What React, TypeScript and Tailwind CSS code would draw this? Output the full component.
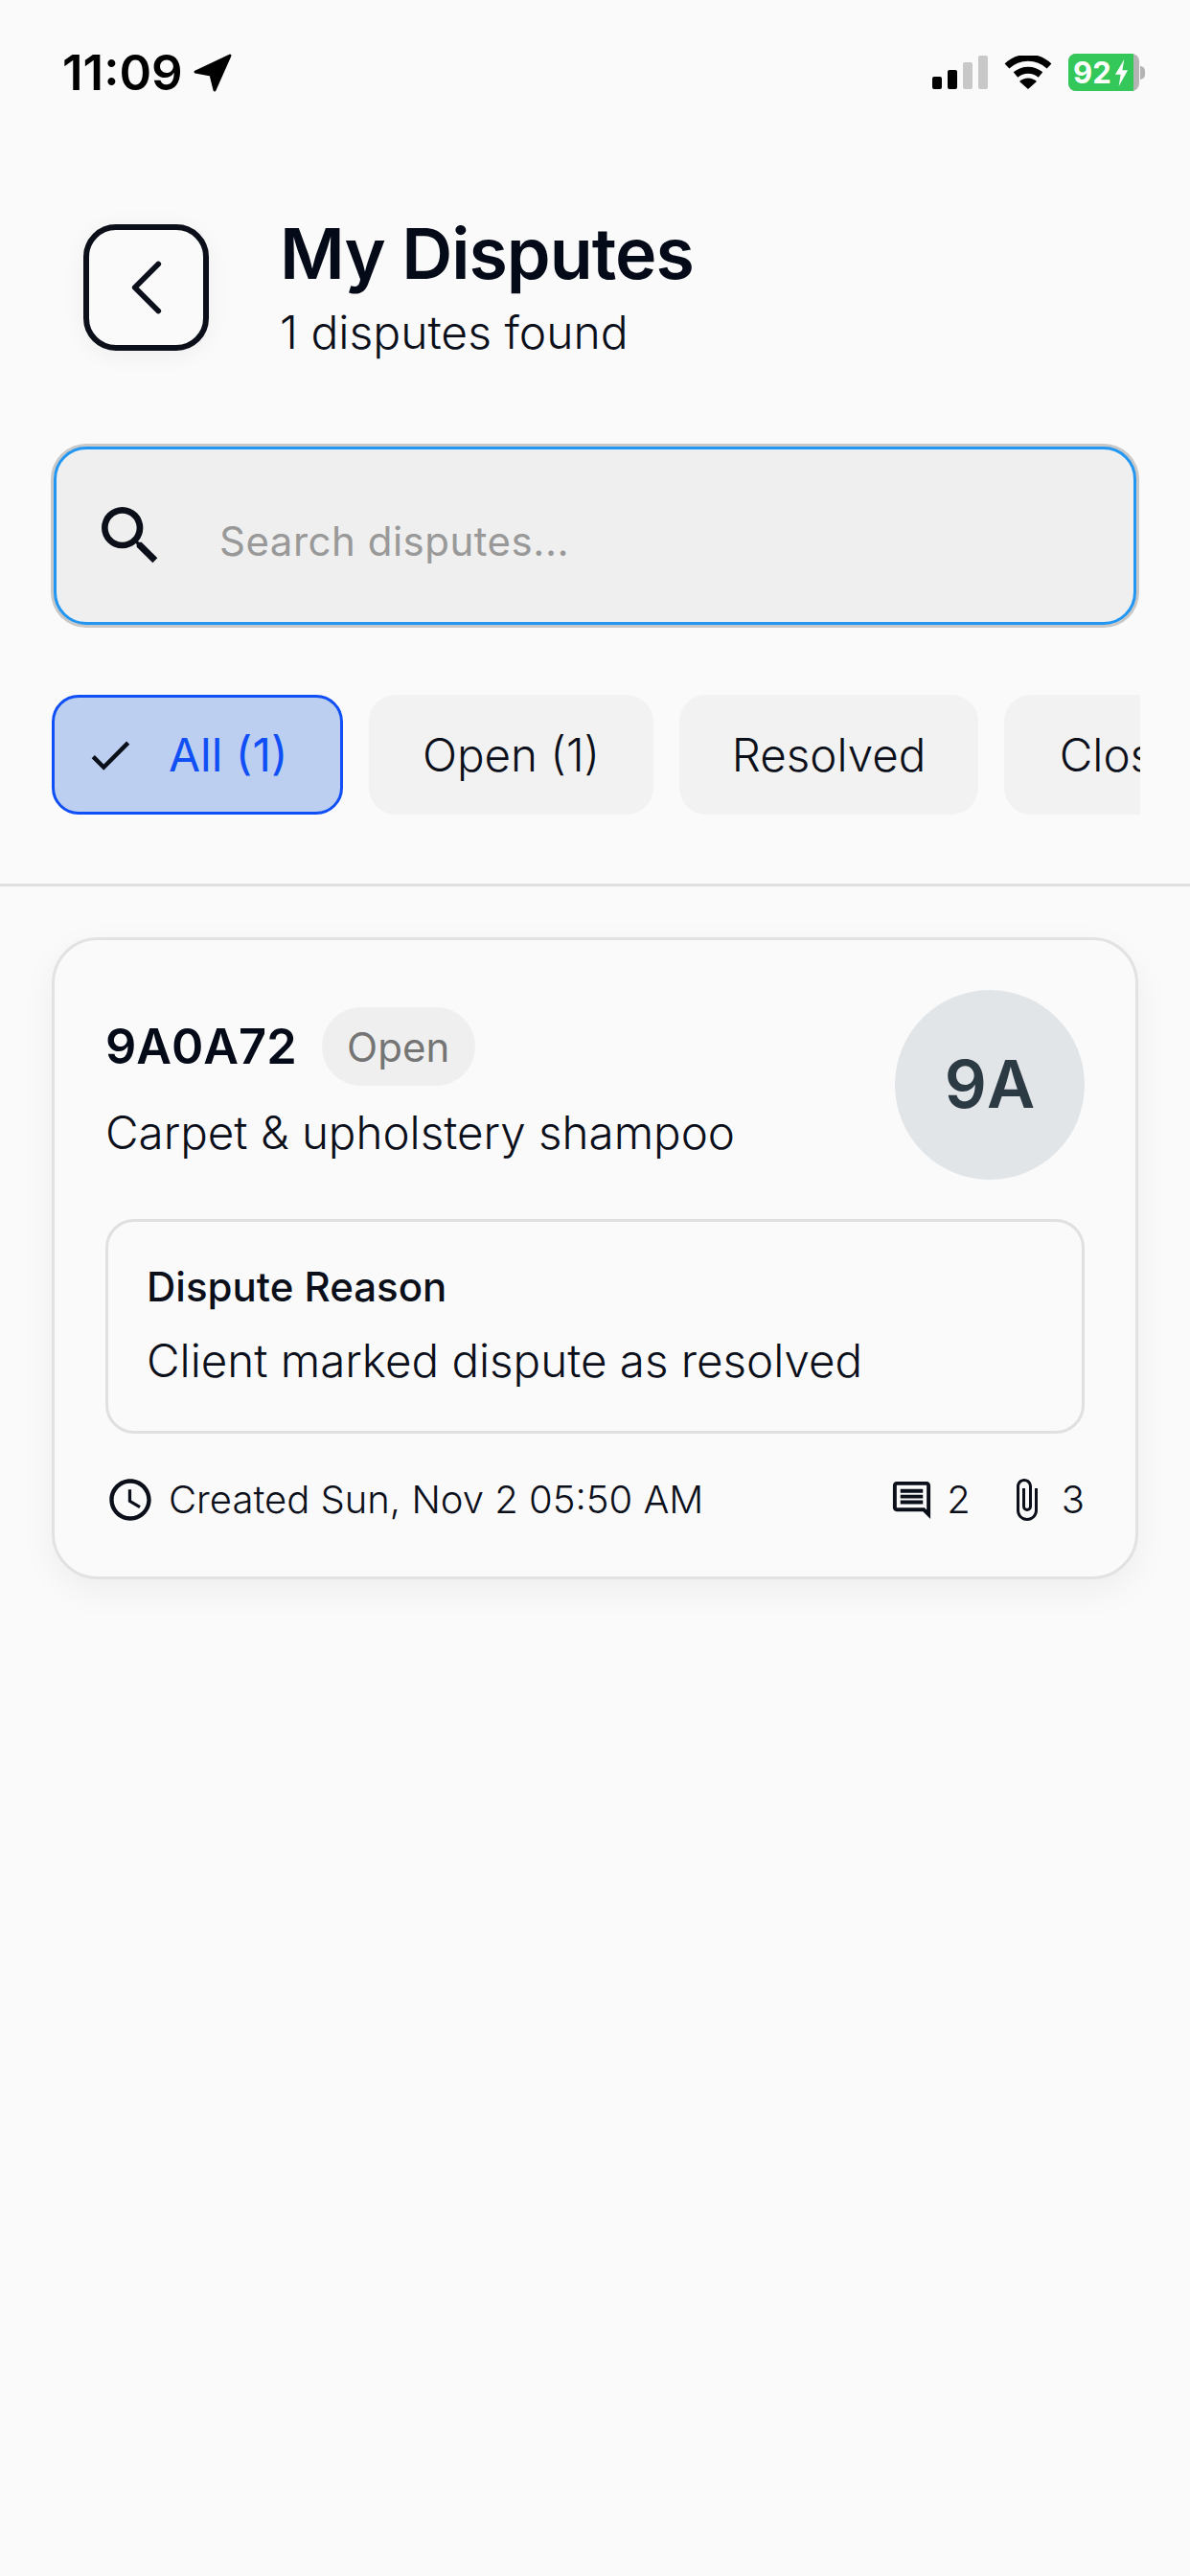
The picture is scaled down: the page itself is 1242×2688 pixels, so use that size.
import { MdAccessTime, MdAttachFile, MdCheck, MdOutlineComment, MdSearch } from "react-icons/md";
import { ChevronLeft } from "lucide-react";

const filters = [
  { label: "Open (1)", width: "w-[297px]" },
  { label: "Resolved", width: "w-[312px]" },
  { label: "Closed", width: "w-[270px]" },
];

function StatusBar() {
  return (
    <div className="flex h-[150px] items-center justify-between pl-[65px] pr-[47px] pt-[1px]">
      <div className="flex items-center gap-[11px] text-[51px] font-semibold leading-none text-black">
        <span>11:09</span>
        <svg viewBox="0 0 40 40" className="h-[40px] w-[40px]">
          <path d="M38 2 L2 19 L18 22 L22 38 Z" fill="#000" stroke="#000" strokeWidth="3" strokeLinejoin="round" />
        </svg>
      </div>
      <div className="flex items-center gap-[17px]">
        <div className="flex items-end gap-[6px]">
          <div className="h-[13px] w-[10px] rounded-[2px] bg-black" />
          <div className="h-[20px] w-[10px] rounded-[2px] bg-black" />
          <div className="h-[28px] w-[10px] rounded-[2px] bg-[#c8c8c8]" />
          <div className="h-[35px] w-[10px] rounded-[2px] bg-[#c8c8c8]" />
        </div>
        <svg viewBox="0 0 50 36" className="h-[36px] w-[50px]">
          <path d="M3 11 A32 32 0 0 1 47 11" fill="none" stroke="#000" strokeWidth="7" />
          <path d="M12 20 A20 20 0 0 1 38 20" fill="none" stroke="#000" strokeWidth="7" />
          <path d="M25 35 L16 27 A13 13 0 0 1 34 27 Z" fill="#000" />
        </svg>
        <div className="flex items-center">
          <div className="flex h-[39px] w-[74px] items-center overflow-hidden rounded-[8px] bg-[#b4b4b4]">
            <div className="flex h-full w-[68px] items-center gap-[3px] overflow-hidden bg-[#34c759] pl-[5px] text-[31px] font-bold leading-none text-white">
              <span>92</span>
              <svg viewBox="0 0 16 30" className="h-[28px] w-[15px] shrink-0">
                <path d="M11 0 L1 17 H7 L5 30 L15 12 H9 Z" fill="#fff" />
              </svg>
            </div>
          </div>
          <div className="ml-[1px] h-[14px] w-[5px] rounded-r-full bg-[#b4b4b4]" />
        </div>
      </div>
    </div>
  );
}

export default function App() {
  return (
    <div className="min-h-[2688px] w-full bg-[#fafafa] font-['Inter',sans-serif] text-[#0b0f1a]">
      <StatusBar />

      {/* Header */}
      <div className="flex items-center gap-[74px] pl-[87px] pt-[71px]">
        <button className="flex h-[132px] w-[131px] items-center justify-center rounded-[34px] border-[6px] border-[#0b0f1a] bg-[#fafafa] shadow-[0_4px_24px_rgba(0,0,0,0.05)]">
          <ChevronLeft className="h-[98px] w-[98px] shrink-0" strokeWidth={1.4} />
        </button>
        <div>
          <h1 className="text-[73.5px] font-semibold leading-[88px] tracking-[-1px] text-[#050a18]">My Disputes</h1>
          <p className="mt-[7px] text-[48px] font-light leading-[62px]">1 disputes found</p>
        </div>
      </div>

      {/* Search */}
      <div className="px-[56px] pt-[88px]">
        <div className="flex h-[186px] items-center gap-[53px] rounded-[34px] border-[3px] border-[#2196f3] bg-[#efefef] pl-[37px] shadow-[0_0_0_3px_#c8c8c8]">
          <MdSearch className="h-[80px] w-[80px] text-[#0b0f1a]" />
          <span className="pt-[10px] text-[42px] font-normal tracking-[0.5px] text-[#999999]">Search disputes...</span>
        </div>
      </div>

      {/* Filters */}
      <div className="ml-[54px] mt-[73px] flex w-[1136px] gap-[27px] overflow-hidden">
        <div className="flex h-[125px] w-[304px] shrink-0 items-center rounded-[28px] border-[3px] border-[#0f4ff5] bg-[#bdcff0] pl-[31px]">
          <MdCheck className="h-[54px] w-[54px] text-[#0b0f1a]" />
          <span className="ml-[34px] text-[48px] font-normal text-[#0f4ff5]">All (1)</span>
        </div>
        {filters.map((filter) => (
          <div
            key={filter.label}
            className={`flex h-[125px] shrink-0 items-center justify-center rounded-[28px] bg-[#f2f2f2] text-[47.5px] font-light text-[#0b0f1a] ${filter.width}`}
          >
            {filter.label}
          </div>
        ))}
      </div>

      <div className="mt-[72px] h-[3px] w-full bg-[#e0e0e0]" />

      {/* Dispute card */}
      <div className="mx-[54px] mt-[53px] rounded-[48px] border-[3px] border-[#e2e2e2] bg-[#fafafa] px-[53px] pb-[54px] pt-[52px] shadow-[0_12px_36px_rgba(0,0,0,0.05)]">
        <div className="flex items-center justify-between">
          <div>
            <div className="flex items-center gap-[26px]">
              <span className="text-[50.5px] font-semibold leading-none text-[#050a18]">9A0A72</span>
              <span className="flex h-[82px] w-[160px] items-center justify-center rounded-full bg-[#efefef] text-[42px] font-normal text-[#757575]">
                Open
              </span>
            </div>
            <p className="mt-[18px] text-[47.5px] font-light leading-[62px]">Carpet &amp; upholstery shampoo</p>
          </div>
          <div className="flex h-[198px] w-[198px] items-center justify-center rounded-full bg-[#e2e5e8] text-[69px] font-semibold text-[#2c3a44]">
            9A
          </div>
        </div>

        <div className="mt-[41px] h-[224px] rounded-[30px] border-[3px] border-[#e0e0e0] px-[40px] pt-[38px]">
          <p className="text-[42px] font-medium leading-[60px]">Dispute Reason</p>
          <p className="mt-[16px] text-[47.5px] font-light leading-[62px]">Client marked dispute as resolved</p>
        </div>

        <div className="mt-[43px] flex items-center justify-between">
          <div className="flex items-center gap-[14px]">
            <MdAccessTime className="h-[52px] w-[52px]" />
            <span className="text-[40px] font-light leading-[52px]">Created Sun, Nov 2 05:50 AM</span>
          </div>
          <div className="flex items-center text-[40px] font-light leading-[52px]">
            <MdOutlineComment className="h-[47px] w-[47px]" />
            <span className="ml-[13px]">2</span>
            <MdAttachFile className="ml-[34px] h-[48px] w-[48px]" />
            <span className="ml-[13px]">3</span>
          </div>
        </div>
      </div>
    </div>
  );
}
